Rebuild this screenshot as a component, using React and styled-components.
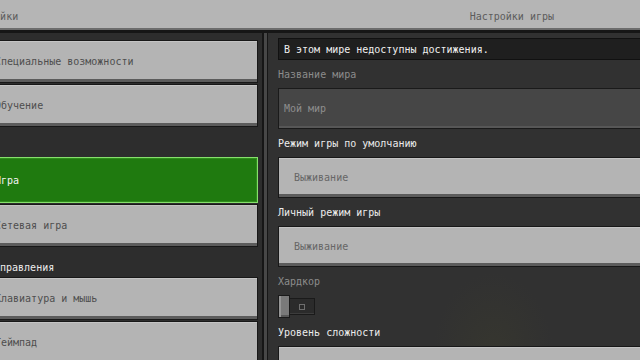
import styled, { createGlobalStyle } from 'styled-components'

const GlobalStyle = createGlobalStyle`
    html, body {
        margin: 0;
        padding: 0;
        background: #2d2d2d;
    }
    body {
        font-family: "DejaVu Sans Mono", "Liberation Mono", monospace;
        font-size: 10px;
    }
`

const Screen = styled.div`
    width: 640px;
    height: 360px;
    overflow: hidden;
    display: flex;
    flex-direction: column;
    background: #2d2d2d;
`

const Header = styled.header`
    height: 30px;
    flex-shrink: 0;
    box-sizing: border-box;
    padding-top: 5px;
    display: flex;
    align-items: center;
    background: #b5b5b5;
    color: #5c5c5c;
    border-bottom: 2px solid #6c6c6c;
    box-shadow: 0 3px 0 #161616;
    position: relative;
    z-index: 1;
`

const HeaderTitle = styled.span`
    margin-left: ${(p) => p.$offset}px;
    ${(p) => p.$right && 'margin-left: auto; margin-right: 86px;'}
    white-space: nowrap;
`

const Body = styled.div`
    flex: 1;
    display: flex;
    margin-top: 3px;
    min-height: 0;
`

const LeftPanel = styled.nav`
    width: 288px;
    flex-shrink: 0;
    margin-left: -24px;
    padding: 7px 4px 0 0;
    box-sizing: border-box;
    display: flex;
    flex-direction: column;
    gap: 1px;
    background: #2d2d2d;
    border-right: 2px solid #161616;
`

const Divider = styled.div`
    width: 3px;
    flex-shrink: 0;
    background: #474747;
    border-right: 1px solid #161616;
`

const NavButton = styled.button`
    height: ${(p) => (p.$active ? 46 : 43)}px;
    flex-shrink: 0;
    box-sizing: border-box;
    padding: 0 0 0 18px;
    text-align: left;
    font: inherit;
    white-space: nowrap;
    cursor: pointer;
    color: ${(p) => (p.$active ? '#f2f2f2' : '#4e4e4e')};
    background: ${(p) => (p.$active ? '#1f7a0f' : '#b4b4b4')};
    border: 1px solid ${(p) => (p.$active ? '#86e06c' : '#181818')};
    box-shadow: ${(p) =>
        p.$active
            ? 'inset 0 0 0 1px #2f8e1c'
            : 'inset 0 -3px 0 #5c5c5c, inset 0 1px 0 #c4c4c4'};
`

const SectionGap = styled.div`
    height: 28px;
    flex-shrink: 0;
    padding: 0 0 2px 18px;
    box-sizing: border-box;
    display: flex;
    align-items: flex-end;
    line-height: 12px;
    color: #ececec;
    white-space: nowrap;
`

const RightPanel = styled.main`
    width: 490px;
    flex-shrink: 0;
    padding: 5px 10px 0 10px;
    box-sizing: border-box;
    display: flex;
    flex-direction: column;
    background: radial-gradient(ellipse 60px 80px at 225px 320px, #36362f 0%, #313131 100%), #313131;
`

const Banner = styled.div`
    height: 22px;
    flex-shrink: 0;
    box-sizing: border-box;
    display: flex;
    align-items: center;
    padding-left: 5px;
    background: #1f1f1f;
    border: 1px solid #111;
    color: #f0f0f0;
    white-space: nowrap;
`

const Label = styled.div`
    height: 28px;
    flex-shrink: 0;
    box-sizing: border-box;
    padding: 9px 0 7px 0;
    line-height: 12px;
    color: ${(p) => (p.$disabled ? '#8c8c8c' : '#ececec')};
    white-space: nowrap;
`

const TextField = styled.div`
    height: 41px;
    flex-shrink: 0;
    box-sizing: border-box;
    display: flex;
    align-items: center;
    padding-left: 5px;
    background: #464646;
    border: 1px solid #1a1a1a;
    box-shadow: inset 0 -2px 0 #575757;
    color: #8e8e8e;
`

const Dropdown = styled.button`
    height: 41px;
    flex-shrink: 0;
    box-sizing: border-box;
    padding: 0 0 0 15px;
    text-align: left;
    font: inherit;
    color: #666;
    background: #b4b4b4;
    border: 1px solid #181818;
    box-shadow: inset 0 -3px 0 #5c5c5c, inset 0 1px 0 #c4c4c4;
    cursor: pointer;
`

const Toggle = styled.div`
    height: 23px;
    flex-shrink: 0;
    display: flex;
    align-items: center;
`

const Knob = styled.div`
    width: 12px;
    height: 23px;
    box-sizing: border-box;
    background: #7a7a7a;
    border: 1px solid #1a1a1a;
    box-shadow: inset 2px 0 0 #969696, inset 0 -2px 0 #595959;
`

const Track = styled.div`
    width: 25px;
    height: 17px;
    box-sizing: border-box;
    display: flex;
    align-items: center;
    justify-content: center;
    background: #2b2b2b;
    border: 1px solid #1a1a1a;
    border-left: none;
    box-shadow: inset 0 -1px 0 #3c3c3c;
`

const OffMark = styled.span`
    width: 6px;
    height: 6px;
    box-sizing: border-box;
    border: 1px solid #6e6e6e;
`

const leftTop = ['Специальные возможности', 'Обучение']
const leftGame = ['Игра', 'Сетевая игра']
const leftControls = ['Клавиатура и мышь', 'Геймпад']

export default function App() {
    return (
        <Screen>
            <GlobalStyle />
            <Header>
                <HeaderTitle $offset={-36}>Настройки</HeaderTitle>
                <HeaderTitle $right>Настройки игры</HeaderTitle>
            </Header>
            <Body>
                <LeftPanel>
                    {leftTop.map((t) => (
                        <NavButton key={t}>{t}</NavButton>
                    ))}
                    <SectionGap />
                    {leftGame.map((t) => (
                        <NavButton key={t} $active={t === 'Игра'}>{t}</NavButton>
                    ))}
                    <SectionGap>Управления</SectionGap>
                    {leftControls.map((t) => (
                        <NavButton key={t}>{t}</NavButton>
                    ))}
                </LeftPanel>
                <Divider />
                <RightPanel>
                    <Banner>В этом мире недоступны достижения.</Banner>
                    <Label $disabled>Название мира</Label>
                    <TextField>Мой мир</TextField>
                    <Label>Режим игры по умолчанию</Label>
                    <Dropdown>Выживание</Dropdown>
                    <Label>Личный режим игры</Label>
                    <Dropdown>Выживание</Dropdown>
                    <Label $disabled>Хардкор</Label>
                    <Toggle>
                        <Knob />
                        <Track><OffMark /></Track>
                    </Toggle>
                    <Label>Уровень сложности</Label>
                    <Dropdown />
                </RightPanel>
            </Body>
        </Screen>
    )
}
